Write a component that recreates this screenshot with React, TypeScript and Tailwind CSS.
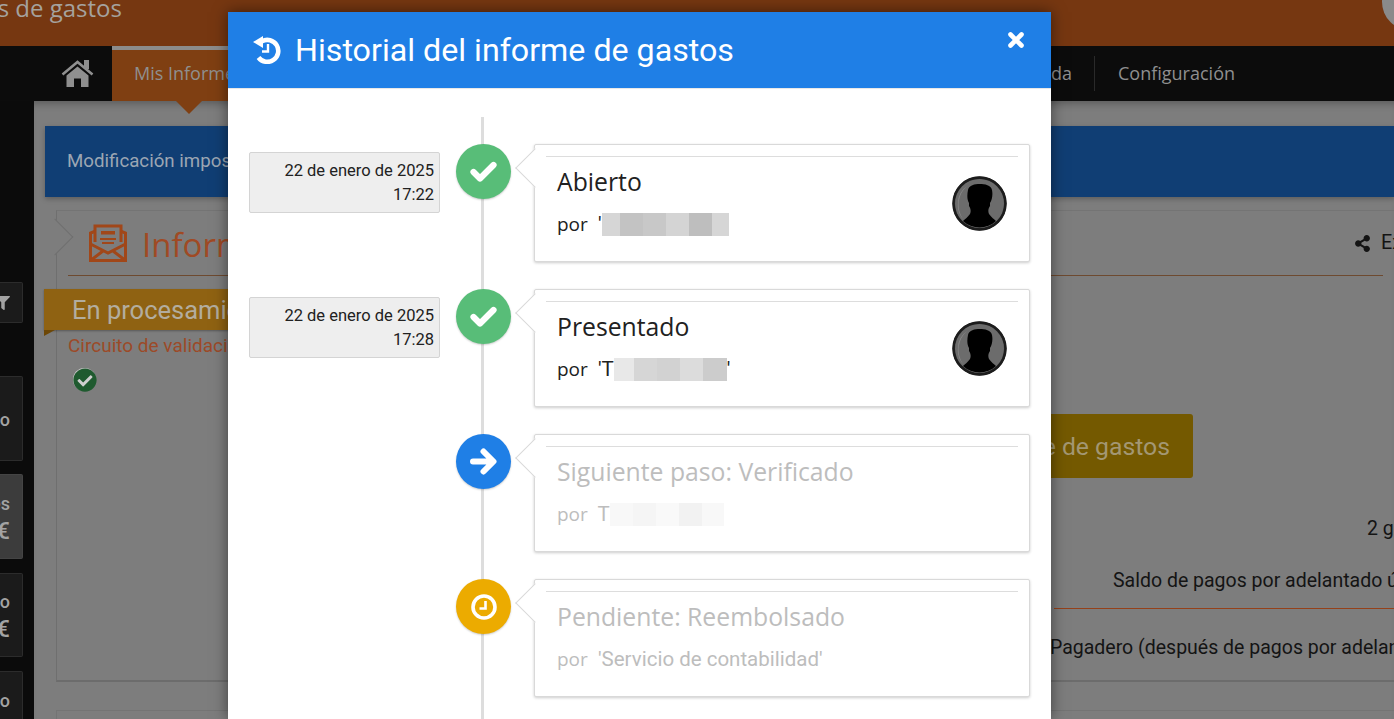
import { FaCheckCircle, FaFilter, FaShareAlt } from "react-icons/fa";

const roboto = "font-['Roboto',sans-serif]";
const openSans = "font-['Open_Sans',sans-serif]";

type Step = {
  title: string;
  by: string;
  date?: string[];
  muted?: boolean;
  avatar?: boolean;
  tail?: string;
  color: string;
  icon: "check" | "arrow" | "clock";
  blur: { w: number; c: string }[];
};

const steps: Step[] = [
  {
    title: "Abierto",
    by: "'",
    date: ["22 de enero de 2025", "17:22"],
    avatar: true,
    color: "bg-[#58bd78]",
    icon: "check",
    blur: [
      { w: 18, c: "#d6d6d6" },
      { w: 23, c: "#c3c3c3" },
      { w: 23, c: "#c8c8c8" },
      { w: 23, c: "#d4d4d4" },
      { w: 23, c: "#bebebe" },
      { w: 17, c: "#d6d6d6" },
    ],
  },
  {
    title: "Presentado",
    by: "'T",
    date: ["22 de enero de 2025", "17:28"],
    avatar: true,
    tail: "'",
    color: "bg-[#58bd78]",
    icon: "check",
    blur: [
      { w: 20, c: "#e8e8e8" },
      { w: 23, c: "#d6d6d6" },
      { w: 23, c: "#d2d2d2" },
      { w: 23, c: "#dcdcdc" },
      { w: 24, c: "#cccccc" },
    ],
  },
  {
    title: "Siguiente paso: Verificado",
    by: "T",
    muted: true,
    color: "bg-[#1f7fe6]",
    icon: "arrow",
    blur: [
      { w: 23, c: "#f8f8f8" },
      { w: 23, c: "#f5f5f5" },
      { w: 23, c: "#f9f9f9" },
      { w: 23, c: "#f2f2f2" },
      { w: 22, c: "#f8f8f8" },
    ],
  },
  {
    title: "Pendiente: Reembolsado",
    by: "'Servicio de contabilidad'",
    muted: true,
    color: "bg-[#ecab00]",
    icon: "clock",
    blur: [],
  },
];

function StepIcon({ icon }: { icon: Step["icon"] }) {
  if (icon === "check") {
    return (
      <svg viewBox="0 0 27 27" className="h-[27px] w-[27px]" fill="none" stroke="#fff" strokeWidth="6.2" strokeLinecap="round" strokeLinejoin="round">
        <path d="M3.5 14l6.5 6.5L23.5 7" />
      </svg>
    );
  }
  if (icon === "arrow") {
    return (
      <svg viewBox="0 0 27 27" className="h-[27px] w-[27px]" fill="none" stroke="#fff" strokeWidth="6" strokeLinecap="round" strokeLinejoin="round">
        <path d="M3 13.5h20M13.5 3.5l10 10-10 10" />
      </svg>
    );
  }
  return (
    <svg viewBox="0 0 26 26" className="h-[26px] w-[26px]" fill="none" stroke="#fff">
      <circle cx="13" cy="13" r="11" strokeWidth="3.6" />
      <path d="M14.5 7v7.5H8.5" strokeWidth="2.6" />
    </svg>
  );
}

function Avatar() {
  return (
    <svg viewBox="0 0 55 55" className="h-[55px] w-[55px] shrink-0">
      <circle cx="27.5" cy="27.5" r="27" fill="#2e2e2e" />
      <circle cx="27.5" cy="27.5" r="24.5" fill="#6c6c6c" />
      <path d="M6 27a21 21 0 0 1 9-17 A25 25 0 0 0 11 43 A21 21 0 0 1 6 27z" fill="#8a8a8a" />
      <path
        d="M16 14C17 9 23 8 27.5 8 33 8 39 9 40 14 41 19 40 24 38 27L38 30C36 33 36 36 37 38 39 41 42 43 44 45A24 24 0 0 1 11 45C13 43 16 41 18 38 19 36 19 33 17 30L17 27C15 24 15 19 16 14z"
        fill="#000"
      />
      <circle cx="27.5" cy="27.5" r="26" fill="none" stroke="#1c1c1c" strokeWidth="2.4" />
    </svg>
  );
}

function HistoryIcon() {
  return (
    <svg viewBox="0 0 28 28" className="h-[28px] w-[28px]" fill="none" stroke="#fff">
      <path d="M9 5.2A11 11 0 1 1 5.5 21.5" strokeWidth="4.6" />
      <path d="M10 0v12L0 6z" fill="#fff" stroke="none" />
      <path d="M15 8v7.5H9" strokeWidth="2.4" />
    </svg>
  );
}

function HomeIcon() {
  return (
    <svg viewBox="0 0 33 27" className="h-[27px] w-[33px]" fill="#8f8f8f">
      <rect x="23" y="0" width="5" height="9" />
      <path d="M1.5 14.5L16.5 2l15 12.5" fill="none" stroke="#8f8f8f" strokeWidth="2.6" />
      <path d="M5.5 15.5l11-9 11 9V27h-7.5v-8.5h-7V27H5.5z" />
    </svg>
  );
}

function EnvelopeIcon() {
  return (
    <svg viewBox="0 0 38 38" className="h-[38px] w-[38px]" fill="none" stroke="#a14719" strokeWidth="3">
      <path d="M6 18V2h26v16" />
      <path d="M5.5 7.5L1.5 9v27.5h35V9l-4-1.5" />
      <path d="M1.5 20L19 29l17.5-9M1.5 36.5L14 27M36.5 36.5L24 27" />
      <path d="M12 7h14v3.5H12z" fill="#a14719" stroke="none" />
      <path d="M11 15h16M13 19h12" strokeWidth="2" />
    </svg>
  );
}

function TimelineRow({ step }: { step: Step }) {
  const text = step.muted ? "text-[#bdbdbd]" : "text-[#212121]";
  return (
    <div className="flex items-start">
      <div className="ml-[21px] w-[191px] shrink-0 pt-[8px]">
        {step.date ? (
          <div className={`h-[61px] rounded-[2px] border border-[#d4d4d4] bg-[#eeeeee] pr-[5px] pt-[6px] text-right text-[16.5px] leading-[24px] text-[#212121] ${roboto}`}>
            {step.date.map((line) => (
              <div key={line}>{line}</div>
            ))}
          </div>
        ) : null}
      </div>

      <div className={`relative z-10 ml-[16px] flex h-[55px] w-[55px] shrink-0 items-center justify-center rounded-full shadow-[0_1px_2px_rgba(0,0,0,0.2)] ${step.color}`}>
        <StepIcon icon={step.icon} />
      </div>

      <div className="relative ml-[23px] h-[118px] w-[496px] shrink-0 rounded-[2px] border border-[#d9d9d9] bg-white px-[11px] pt-[11px] shadow-[0_1px_3px_rgba(0,0,0,0.2)]">
        <div className="absolute left-[-14px] top-[9px] h-[28px] w-[28px] rotate-45 border-b border-l border-[#d9d9d9] bg-white" />
        <div className="relative flex items-start justify-between border-t border-[#dddddd] pl-[11px] pr-[11px]">
          <div>
            <div className={`mt-[9px] text-[24.75px] leading-[32px] ${openSans} ${text}`}>{step.title}</div>
            <div className={`mt-[14px] flex h-[24px] items-center whitespace-pre ${roboto} ${text}`}>
              <span className={`${openSans} text-[19px]`}>por</span>
              <span className="text-[20.5px]">{"  " + step.by}</span>
              <span className="flex h-[23px]">
                {step.blur.map((b, i) => (
                  <span key={i} className="h-full" style={{ width: b.w, backgroundColor: b.c }} />
                ))}
              </span>
              {step.tail ? <span className="text-[20.5px]">{step.tail}</span> : null}
            </div>
          </div>
          {step.avatar ? (
            <div className="mt-[19px]">
              <Avatar />
            </div>
          ) : null}
        </div>
      </div>
    </div>
  );
}

function SideBox({
  label,
  amount,
  active,
  className,
}: {
  label: string;
  amount?: boolean;
  active?: boolean;
  className: string;
}) {
  return (
    <div
      className={`flex shrink-0 flex-col items-end overflow-hidden whitespace-nowrap rounded-r-[2px] border border-l-0 pr-[12px] font-medium text-[#a3a3a3] ${roboto} ${className} ${
        active ? "border-[#444444] bg-[#3c3c3c]" : "border-[#2c2c2c] bg-[#1b1b1b]"
      }`}
    >
      <div className="text-[18px] leading-[22px]">{label}</div>
      {amount ? <div className="text-[24px] leading-[32px]">0,00 €</div> : null}
    </div>
  );
}

export default function App() {
  return (
    <div className="relative flex h-[719px] w-[1394px] flex-col overflow-hidden bg-[#7d7d7d]">
      {/* top bar */}
      <header className="flex h-[46px] shrink-0 items-start justify-between overflow-hidden bg-[#763711]">
        <div className={`-mt-[12px] flex w-[122px] justify-end overflow-hidden whitespace-nowrap text-[24px] leading-[40px] text-[#a5a29e] ${openSans}`}>
          Informes de gastos
        </div>
        <div className="-mr-[44px] -mt-[26px] h-[56px] w-[56px] rounded-full bg-[#8a8a8a]" />
      </header>

      {/* nav */}
      <nav className={`relative z-10 flex h-[55px] shrink-0 items-center bg-[#0c0c0c] text-[18px] text-[#8f8f8f] ${openSans}`}>
        <div className="flex w-[112px] justify-end pr-[18px]">
          <HomeIcon />
        </div>
        <div className="relative flex h-full w-[200px] items-center border-t-4 border-[#8c8c8c] bg-[#7f3f12] pb-[4px] pl-[22px]">
          Mis Informes
          <div className="absolute left-[64px] top-[51px] border-x-[13px] border-t-[13px] border-x-transparent border-t-[#7f3f12]" />
        </div>
        <div className="flex-1" />
        <div className="flex h-[35px] items-center border-r border-[#2a2a2a] pr-[22px]">Ayuda</div>
        <div className="pl-[23px] pr-[159px]">Configuración</div>
      </nav>

      <div className="flex min-h-0 flex-1">
        {/* left rail */}
        <aside className="flex w-[34px] shrink-0 flex-col bg-[#0b0b0b] pr-[11px]">
          <div className="mt-[181px] flex h-[41px] shrink-0 items-center justify-end overflow-hidden rounded-r-[2px] border border-l-0 border-[#2c2c2c] bg-[#1b1b1b] pr-[12px]">
            <FaFilter className="h-[14px] w-[14px] shrink-0 text-[#a3a3a3]" />
          </div>
          <SideBox label="Abierto" className="mt-[53px] h-[85px] pt-[32px]" />
          <SideBox label="Pendientes" amount active className="mt-[13px] h-[85px] pt-[18px]" />
          <SideBox label="Pagado" amount className="mt-[14px] h-[84px] pt-[17px]" />
          <SideBox label="Rechazado" amount className="mt-[14px] h-[85px] pt-[18px]" />
        </aside>

        {/* page behind the dialog */}
        <main className="min-w-0 flex-1 pt-[25px] shadow-[inset_0_8px_8px_-6px_rgba(0,0,0,0.3)]">
          <div className={`ml-[11px] flex h-[71px] items-center bg-[#103e74] pl-[22px] text-[18.7px] text-[#9ca6b3] shadow-[0_2px_5px_rgba(0,0,0,0.25)] ${roboto}`}>
            Modificación imposible
          </div>

          <section className="relative ml-[22px] mt-[13px] h-[472px] border-b-2 border-l border-t border-b-[#6c6c6c] border-l-[#6f6f6f] border-t-[#747474]">
            <div className="absolute left-[-15px] top-[13px] h-[26px] w-[26px] rotate-45 border-r border-t border-[#6f6f6f] bg-[#7d7d7d]" />

            <div className="mx-[11px] flex h-[65px] items-center justify-between border-b border-[#6e4a30] pl-[21px]">
              <div className="flex items-center">
                <EnvelopeIcon />
                <span className={`ml-[15px] pt-[3px] text-[33px] text-[#a04a24] ${openSans}`}>Informe de gastos</span>
              </div>
              <div className={`-mr-[12px] flex items-center text-[19.8px] text-[#141414] ${roboto}`}>
                <FaShareAlt className="mr-[10px] h-[17px] w-[17px] shrink-0" />
                <span className="w-[14px] shrink-0 whitespace-nowrap">Exportar</span>
              </div>
            </div>

            <div className={`flex text-[19.5px] ${roboto}`}>
              <div className="w-[745px] shrink-0">
                <div className="relative -ml-[13px] mt-[13px] flex h-[41px] items-center bg-[#8f6212] pl-[28px] pt-[2px] text-[25.5px] text-[#b3ad9f] shadow-[0_1px_2px_rgba(0,0,0,0.3)]">
                  En procesamiento
                  <div className="absolute left-0 top-[41px] border-r-[11px] border-t-[6px] border-r-transparent border-t-[#6d4706]" />
                </div>
                <div className="ml-[11px] mt-[4px] text-[19px] leading-[24px] text-[#9c4a28]">Circuito de validación</div>
                <div className="ml-[16px] mt-[10px] flex h-[23px] w-[23px] items-center justify-center rounded-full bg-[#cfcfcf]">
                  <FaCheckCircle className="h-[24px] w-[24px] shrink-0 text-[#1f5a2f]" />
                </div>
              </div>

              <div className="min-w-0 flex-1 whitespace-nowrap text-[#141414]">
                <div className="mt-[138px] flex h-[64px] w-[391px] items-center justify-end rounded-[3px] bg-[#745900] pr-[23px] pt-[2px] text-[24.75px] text-[#a39773]">
                  Informe de gastos
                </div>
                <div className="ml-[565px] mt-[39px] leading-[24px]">2 gastos</div>
                <div className="ml-[311px] mt-[28px] leading-[24px]">Saldo de pagos por adelantado único</div>
                <div className="ml-[252px] mt-[15px] h-px bg-[#95411a]" />
                <div className="ml-[248px] mt-[27px] leading-[24px]">Pagadero (después de pagos por adelantado)</div>
              </div>
            </div>
          </section>

          <div className="ml-[22px] mt-[28px] h-[20px] border-l border-t border-[#747474]" />
        </main>
      </div>

      {/* dialog */}
      <div className="absolute left-[228px] top-[12px] z-20 h-[707px] w-[823px] overflow-hidden bg-white shadow-[0_0_14px_rgba(0,0,0,0.5)]">
        <div className="flex h-[77px] items-start justify-between border-b border-[#e8e8e8] bg-[#1f7fe6] pl-[25px] pr-[27px] text-white">
          <div className="flex h-full items-center">
            <HistoryIcon />
            <h1 className={`ml-[14px] text-[32.2px] font-normal ${roboto}`}>Historial del informe de gastos</h1>
          </div>
          <svg viewBox="0 0 16 16" className="mt-[20px] h-[16px] w-[16px]" fill="none" stroke="#fff" strokeWidth="4.6" strokeLinecap="round">
            <path d="M2.5 2.5l11 11M13.5 2.5l-11 11" />
          </svg>
        </div>

        <div className="relative flex flex-col gap-[27px] pt-[55px]">
          <div className="absolute left-[253px] top-[28px] h-[620px] w-[3px] bg-[#dddddd]" />
          {steps.map((step) => (
            <TimelineRow key={step.title} step={step} />
          ))}
        </div>
      </div>
    </div>
  );
}
